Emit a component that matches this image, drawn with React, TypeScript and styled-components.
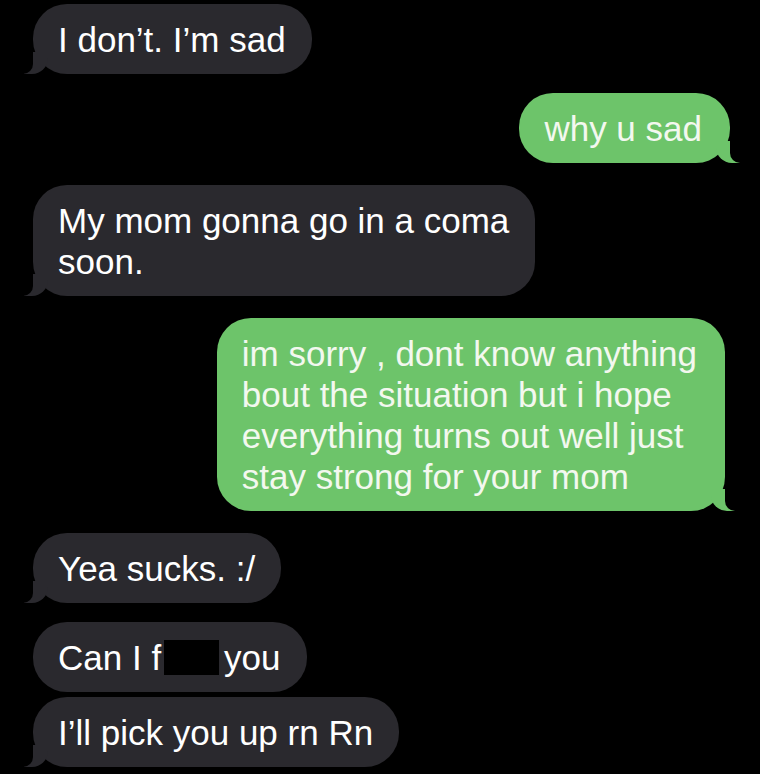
import React from "react";
import styled, { createGlobalStyle, css } from "styled-components";

const Global = createGlobalStyle`
  html, body { margin: 0; padding: 0; background: #000; }
  body { font-family: "Liberation Sans", Arial, Helvetica, sans-serif; }
`;

const Thread = styled.div`
  display: flex;
  flex-direction: column;
  padding: 4px 30px 0 33px;
  width: 760px;
  height: 774px;
  box-sizing: border-box;
  overflow: hidden;
  background: #000;
`;

type Side = "in" | "out";

const Row = styled.div<{ $side: Side; $gap: number; $inset: number }>`
  display: flex;
  justify-content: ${(p) => (p.$side === "in" ? "flex-start" : "flex-end")};
  margin-top: ${(p) => p.$gap}px;
  padding-right: ${(p) => p.$inset}px;
`;

const Bubble = styled.div<{ $side: Side; $tail: boolean }>`
  position: relative;
  box-sizing: border-box;
  padding: ${(p) => (p.$side === "in" ? "15px 26px 14px 25px" : "15px 28px 14px 25px")};
  border-radius: 34px;
  font-size: 35px;
  line-height: 41px;
  white-space: nowrap;
  background: ${(p) => (p.$side === "in" ? "#2a292e" : "#6dc46a")};
  color: ${(p) => (p.$side === "in" ? "#ffffff" : "#f3f8ef")};

  ${(p) =>
    p.$tail &&
    p.$side === "in" &&
    css`
      &::before {
        content: "";
        position: absolute;
        bottom: 0;
        left: -9px;
        width: 24px;
        height: 22px;
        background: #2a292e;
        border-bottom-right-radius: 16px;
      }
      &::after {
        content: "";
        position: absolute;
        bottom: 0;
        left: -12px;
        width: 12px;
        height: 22px;
        background: #000;
        border-bottom-right-radius: 10px;
      }
    `}

  ${(p) =>
    p.$tail &&
    p.$side === "out" &&
    css`
      &::before {
        content: "";
        position: absolute;
        bottom: 0;
        right: -10px;
        width: 24px;
        height: 22px;
        background: #6dc46a;
        border-bottom-left-radius: 16px;
      }
      &::after {
        content: "";
        position: absolute;
        bottom: 0;
        right: -13px;
        width: 13px;
        height: 22px;
        background: #000;
        border-bottom-left-radius: 10px;
      }
    `}
`;

const Redacted = styled.span`
  display: inline-block;
  width: 55px;
  height: 35px;
  margin: 0 5px 0 3px;
  background: #000;
  vertical-align: -5px;
`;

type Msg = {
  side: Side;
  gap: number;
  tail: boolean;
  inset?: number;
  content: React.ReactNode;
};

const messages: Msg[] = [
  { side: "in", gap: 0, tail: true, content: "I don’t. I’m sad" },
  { side: "out", gap: 19, tail: true, content: "why u sad" },
  {
    side: "in",
    gap: 22,
    tail: true,
    content: (
      <>
        My mom gonna go in a coma
        <br />
        soon.
      </>
    ),
  },
  {
    side: "out",
    gap: 22,
    tail: true,
    inset: 5,
    content: (
      <>
        im sorry , dont know anything
        <br />
        bout the situation but i hope
        <br />
        everything turns out well just
        <br />
        stay strong for your mom
      </>
    ),
  },
  { side: "in", gap: 22, tail: true, content: "Yea sucks. :/" },
  {
    side: "in",
    gap: 19,
    tail: false,
    content: (
      <>
        Can I f<Redacted />
        you
      </>
    ),
  },
  { side: "in", gap: 5, tail: true, content: "I’ll pick you up rn Rn" },
];

export default function App() {
  return (
    <>
      <Global />
      <Thread>
        {messages.map((m, i) => (
          <Row key={i} $side={m.side} $gap={m.gap} $inset={m.inset ?? 0}>
            <Bubble $side={m.side} $tail={m.tail}>
              {m.content}
            </Bubble>
          </Row>
        ))}
      </Thread>
    </>
  );
}
